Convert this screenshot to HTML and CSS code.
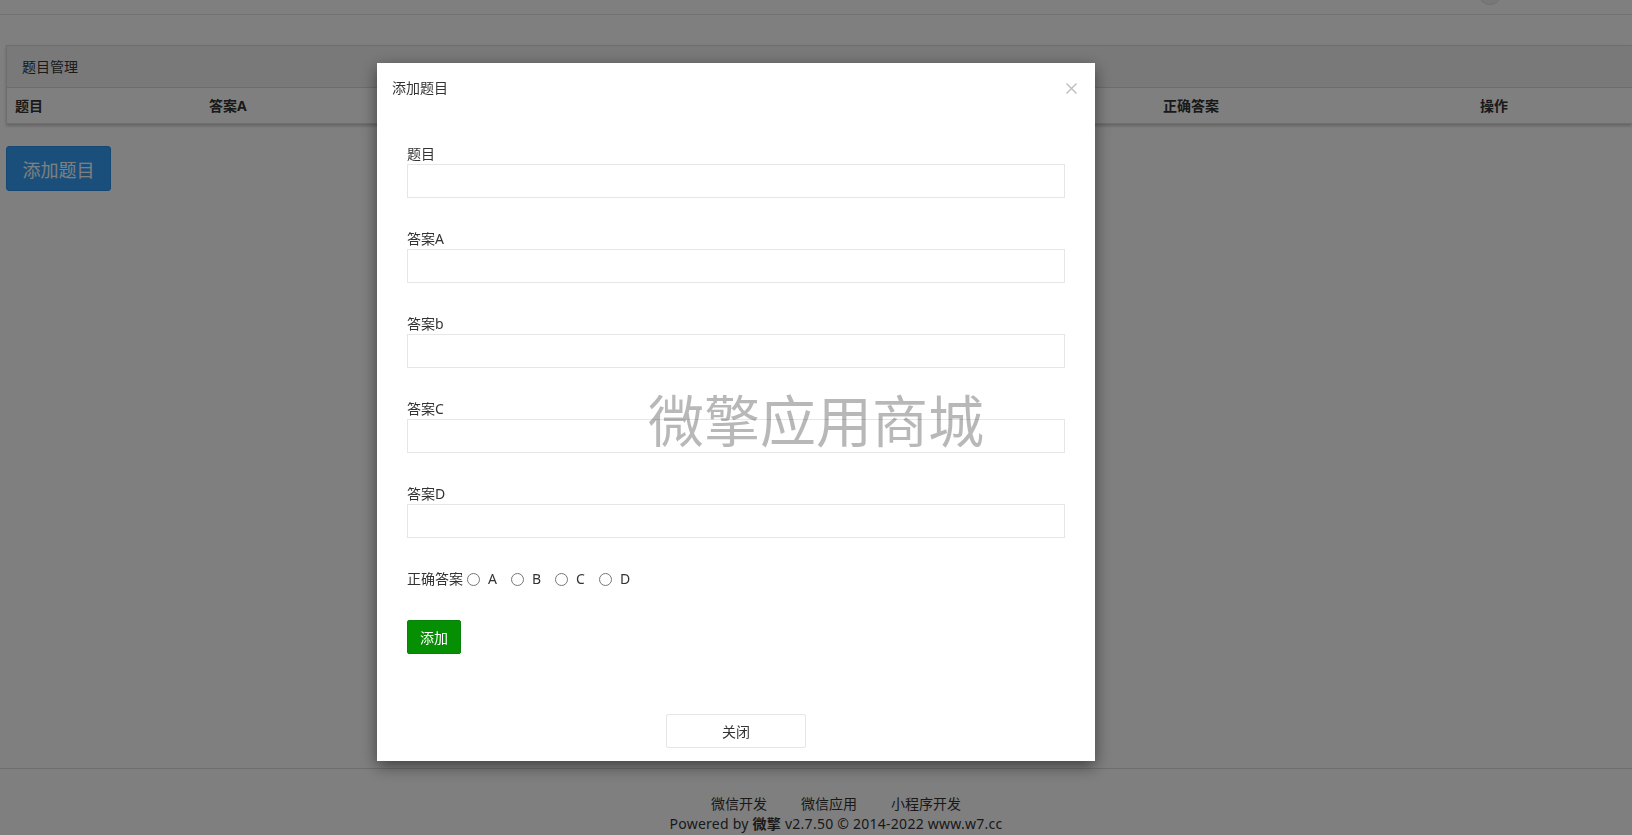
FILE: index.html
```html
<!DOCTYPE html>
<html lang="zh-CN">
<head>
<meta charset="utf-8">
<title>题目管理</title>
<link rel="stylesheet" href="styles.css">
</head>
<body>
<div class="page">
  <header class="topbar"><span class="avatar"></span></header>
  <main class="content">
    <section class="panel">
      <div class="panel-heading">题目管理</div>
      <table class="qtable">
        <colgroup>
          <col class="c1"><col class="c2"><col class="c2"><col class="c2"><col class="c2"><col class="c6"><col>
        </colgroup>
        <thead>
          <tr><th>题目</th><th>答案A</th><th>答案B</th><th>答案C</th><th>答案D</th><th>正确答案</th><th>操作</th></tr>
        </thead>
      </table>
    </section>
    <button class="btn-add-q" type="button">添加题目</button>
  </main>
  <footer class="site-footer">
    <div class="links"><a>微信开发</a><a>微信应用</a><a>小程序开发</a></div>
    <div class="copy">Powered by <b>微擎</b> v2.7.50 © 2014-2022 www.w7.cc</div>
  </footer>
</div>

<div class="mask"></div>

<div class="modal">
  <div class="modal-header">
    <span class="modal-title">添加题目</span>
    <span class="modal-close"><svg width="11" height="11" viewBox="0 0 11 11"><path d="M0.5 0.5 L10.5 10.5 M10.5 0.5 L0.5 10.5" stroke="#bdbdbd" stroke-width="1.4" fill="none"/></svg></span>
  </div>
  <div class="modal-body">
    <div class="form-group"><label>题目</label><input type="text"></div>
    <div class="form-group"><label>答案A</label><input type="text"></div>
    <div class="form-group"><label>答案b</label><input type="text"></div>
    <div class="form-group"><label>答案C</label><input type="text"></div>
    <div class="form-group"><label>答案D</label><input type="text"></div>
    <div class="radio-row">
      <span class="radio-label">正确答案</span>
      <label class="opt"><input type="radio" name="ans"><span>A</span></label>
      <label class="opt"><input type="radio" name="ans"><span>B</span></label>
      <label class="opt"><input type="radio" name="ans"><span>C</span></label>
      <label class="opt"><input type="radio" name="ans"><span>D</span></label>
    </div>
    <button class="btn-green" type="button">添加</button>
  </div>
  <div class="modal-footer">
    <button class="btn-close" type="button">关闭</button>
  </div>
</div>

<div class="watermark">微擎应用商城</div>
</body>
</html>
```

FILE: styles.css
```css
* { box-sizing: border-box; }
html, body { margin: 0; padding: 0; }
body {
  font-family: "Noto Sans", "Noto Sans CJK SC", sans-serif;
  font-size: 14px;
  color: #333;
  background: #fff;
}
.page {
  min-height: 100vh;
  display: flex;
  flex-direction: column;
  overflow: hidden;
}
.topbar {
  height: 15px;
  border-bottom: 1px solid #e4e4e4;
  position: relative;
  background: #fff;
}
.avatar {
  position: absolute;
  left: 1478px;
  top: -19px;
  width: 24px;
  height: 24px;
  border-radius: 50%;
  background: #f0f0f0;
  border: 1px solid #e0e0e0;
}
.content {
  padding: 30px 0 0 6px;
}
.panel {
  border: 1px solid #ddd;
  border-right: 0;
  background: #fff;
  box-shadow: 0 2px 3px rgba(0,0,0,.22);
}
.panel-heading {
  background: #f3f3f3;
  border-bottom: 1px solid #d8d8d8;
  padding: 10px 15px;
  line-height: 21px;
  height: 42px;
  color: #333;
}
.qtable {
  width: 100%;
  border-collapse: collapse;
  table-layout: fixed;
}
.qtable col.c1 { width: 194px; }
.qtable col.c2 { width: 238.5px; }
.qtable col.c6 { width: 317px; }
.qtable th {
  text-align: left;
  font-weight: bold;
  padding: 8px;
  line-height: 19px;
  color: #333;
}
.btn-add-q {
  margin-top: 22px;
  width: 105px;
  height: 45px;
  border: 1px solid #2b8ee8;
  border-radius: 3px;
  background: #369ff6;
  color: #fff;
  font-family: inherit;
  font-size: 18px;
  padding: 0;
}
.site-footer {
  margin-top: auto;
  border-top: 1px solid #ddd;
  padding: 25px 0 1px 40px;
  text-align: center;
  line-height: 20px;
  color: #333;
}
.links a { margin: 0 17px; color: #333; }
.copy { letter-spacing: 0.25px; }
.copy b { font-weight: bold; }

.mask {
  position: fixed;
  inset: 0;
  background: rgba(0,0,0,.5);
}
.modal {
  position: fixed;
  left: 377px;
  top: 63px;
  width: 718px;
  background: #fff;
  box-shadow: 0 5px 15px rgba(0,0,0,.5);
}
.modal-header {
  display: flex;
  justify-content: space-between;
  align-items: center;
  padding: 15px 18px 15px 15px;
  line-height: 20px;
}
.modal-title { font-size: 14px; color: #333; }
.modal-close { display: flex; }
.modal-body {
  padding: 31px 30px 30px;
}
.form-group { margin-bottom: 31px; }
.form-group label {
  display: block;
  line-height: 20px;
  color: #333;
}
.form-group input {
  display: block;
  width: 100%;
  height: 34px;
  border: 1px solid #e6e6e6;
  border-radius: 0;
  outline: none;
  padding: 6px 12px;
  font-family: inherit;
}
.radio-row {
  display: flex;
  align-items: center;
  line-height: 20px;
  margin-bottom: 31px;
}
.opt {
  display: inline-flex;
  align-items: center;
  width: 44px;
}
.opt input {
  margin: 0 8px 0 0;
  width: 13px;
  height: 13px;
}
.radio-label { margin-right: 4px; }
.btn-green {
  display: block;
  width: 54px;
  height: 34px;
  background: #078f03;
  border: 1px solid #06830a;
  border-radius: 2px;
  color: #fff;
  font-family: inherit;
  font-size: 14px;
  padding: 0;
}
.modal-footer {
  text-align: center;
  padding: 30px 0 13px;
}
.btn-close {
  width: 140px;
  height: 34px;
  background: #fff;
  border: 1px solid #e5e5e5;
  border-radius: 2px;
  font-family: inherit;
  font-size: 14px;
  color: #333;
  padding: 0;
}
.watermark {
  position: fixed;
  left: 50%;
  top: 50%;
  transform: translate(-50%, -50%);
  font-family: "Noto Sans CJK SC", sans-serif;
  font-size: 56px;
  line-height: 1;
  color: rgba(0,0,0,.28);
  white-space: nowrap;
  pointer-events: none;
}
```
